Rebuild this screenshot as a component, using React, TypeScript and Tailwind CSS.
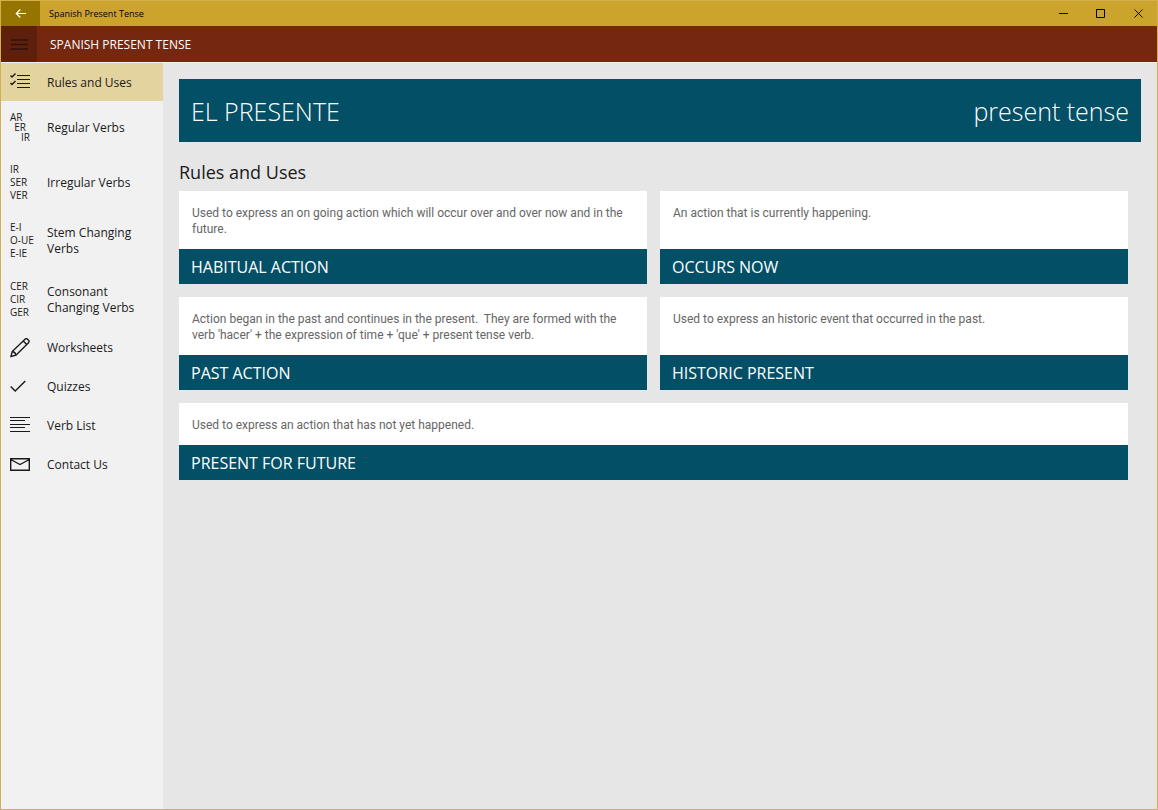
import { ReactNode, useState } from "react";

type NavItem = {
  label: string;
  height: string;
  icon: ReactNode;
};

type Rule = {
  title: string;
  text: string;
  wide?: boolean;
};

const rules: Rule[] = [
  {
    title: "HABITUAL ACTION",
    text: "Used to express an on going action which will occur over and over now and in the future.",
  },
  { title: "OCCURS NOW", text: "An action that is currently happening." },
  {
    title: "PAST ACTION",
    text: "Action began in the past and continues in the present.\u00a0 They are formed with the verb 'hacer' + the expression of time + 'que' + present tense verb.",
  },
  {
    title: "HISTORIC PRESENT",
    text: "Used to express an historic event that occurred in the past.",
  },
  {
    title: "PRESENT FOR FUTURE",
    text: "Used to express an action that has not yet happened.",
    wide: true,
  },
];

const Icon = ({ children }: { children: ReactNode }) => (
  <svg
    width="20"
    height="20"
    viewBox="0 0 20 20"
    fill="none"
    stroke="currentColor"
    strokeWidth="1.4"
    aria-hidden="true"
  >
    {children}
  </svg>
);

const Endings = ({ lines }: { lines: string[] }) => (
  <span className="flex flex-col text-[10px] leading-[13px] whitespace-nowrap">
    {lines.map((line) => (
      <span key={line}>{line}</span>
    ))}
  </span>
);

const navItems: NavItem[] = [
  {
    label: "Rules and Uses",
    height: "h-[38px]",
    icon: (
      <Icon>
        <path strokeWidth="1.2" d="M7 3.5h13M7 7.5h13M7 11.5h13M7 15.5h13" />
        <path d="M.5 3.5L2 5l3.5-3.5M.5 11L2 12.5 5.5 9" />
      </Icon>
    ),
  },
  {
    label: "Regular Verbs",
    height: "h-[52px]",
    icon: (
      <span className="flex flex-col w-5 text-[10px] leading-[10px]">
        <span>AR</span>
        <span className="text-center">ER</span>
        <span className="text-right">IR</span>
      </span>
    ),
  },
  {
    label: "Irregular Verbs",
    height: "h-[58px]",
    icon: <Endings lines={["IR", "SER", "VER"]} />,
  },
  {
    label: "Stem Changing Verbs",
    height: "h-[59px]",
    icon: <Endings lines={["E-I", "O-UE", "E-IE"]} />,
  },
  {
    label: "Consonant Changing Verbs",
    height: "h-[58px]",
    icon: <Endings lines={["CER", "CIR", "GER"]} />,
  },
  {
    label: "Worksheets",
    height: "h-[39px]",
    icon: (
      <Icon>
        <path d="M1 18.5l1.2-5L15 1.2a1.8 1.8 0 0 1 2.5 0l1 1a1.8 1.8 0 0 1 0 2.5L6 17.2z" />
        <path d="M13.2 3l3.6 3.6M2.2 13.5c1.8.3 3.4 1.8 3.8 3.7" />
      </Icon>
    ),
  },
  {
    label: "Quizzes",
    height: "h-[39px]",
    icon: (
      <Icon>
        <path d="M.7 9.5L5.2 14 15.3 4" />
      </Icon>
    ),
  },
  {
    label: "Verb List",
    height: "h-[39px]",
    icon: (
      <Icon>
        <path
          strokeWidth="1"
          d="M0 1.5h20M0 4.5h15M0 8.5h20M0 11.5h15M0 15.5h20"
        />
      </Icon>
    ),
  },
  {
    label: "Contact Us",
    height: "h-[39px]",
    icon: (
      <Icon>
        <path d="M.7 3.7h18.6v11.6H.7zM.7 4.5L10 9.5l9.3-5" />
      </Icon>
    ),
  },
];

const TitleBar = () => (
  <div className="flex h-[25px] items-stretch bg-[#cca42b] text-black">
    <button
      aria-label="Back"
      className="flex w-[39px] items-center justify-center bg-[#967400] text-white"
    >
      <svg width="12" height="10" viewBox="0 0 12 10" fill="none" stroke="currentColor">
        <path strokeWidth="1.2" d="M11 4.5H1M5.3.5l-4 4 4 4" />
      </svg>
    </button>
    <span className="flex-1 self-center pl-[9px] text-[9px] leading-3">
      Spanish Present Tense
    </span>
    <button aria-label="Minimize" className="flex w-[37px] items-center justify-center">
      <svg width="9" height="9" viewBox="0 0 9 9" stroke="currentColor">
        <path d="M0 4.5h9" />
      </svg>
    </button>
    <button aria-label="Maximize" className="flex w-[37px] items-center justify-center">
      <svg width="9" height="9" viewBox="0 0 9 9" fill="none" stroke="currentColor">
        <path d="M.5.5h8v8h-8z" />
      </svg>
    </button>
    <button aria-label="Close" className="flex w-[38px] items-center justify-center">
      <svg width="9" height="9" viewBox="0 0 9 9" stroke="currentColor">
        <path d="M.5.5l8 8M8.5.5l-8 8" />
      </svg>
    </button>
  </div>
);

const Header = () => (
  <header className="flex h-[37px] items-stretch border-b border-[#f1efee] bg-[#75270f] text-white">
    <button
      aria-label="Menu"
      className="flex w-9 items-center justify-center bg-[#5e200d] text-[#32110a]"
    >
      <svg width="17" height="12" viewBox="0 0 17 12" stroke="currentColor">
        <path strokeWidth="1.4" d="M0 2h17M0 6.5h17M0 11h17" />
      </svg>
    </button>
    <h1 className="self-center pt-0.5 pl-[13px] text-[12px]">SPANISH PRESENT TENSE</h1>
  </header>
);

const RuleCard = ({ rule }: { rule: Rule }) => (
  <article className={rule.wide ? "col-span-2 flex flex-col" : "flex flex-col"}>
    <p className="flex-1 bg-white pt-[14px] pr-2 pb-3 pl-[13px] font-[Roboto,sans-serif] text-[12px] leading-4 text-[#666]">
      {rule.text}
    </p>
    <h3 className="bg-[#024f66] px-3 pt-[5px] pb-[3px] text-[16px] leading-[27px] text-white">
      {rule.title}
    </h3>
  </article>
);

const App = () => {
  const [selected, setSelected] = useState("Rules and Uses");

  return (
    <div className="flex min-h-screen flex-col border border-[#d3b04c] bg-[#e6e6e6] font-['Open_Sans',sans-serif]">
      <TitleBar />
      <Header />
      <div className="flex flex-1">
        <nav className="w-[162px] shrink-0 bg-[#f1f1f1] text-[#1a1a1a]">
          {navItems.map((item) => (
            <button
              key={item.label}
              onClick={() => setSelected(item.label)}
              className={`flex w-full items-center pl-[9px] text-left ${item.height} ${
                selected === item.label ? "bg-[#e3d39e]" : ""
              }`}
            >
              <span className="w-[37px] shrink-0">{item.icon}</span>
              <span className="pt-px pr-4 text-[12px] leading-4">{item.label}</span>
            </button>
          ))}
        </nav>
        <main className="min-w-0 flex-1 p-4">
          <div className="flex h-[63px] items-center justify-between bg-[#024f66] px-3 pt-[3px] text-[25px] font-light text-white">
            <h2>EL PRESENTE</h2>
            <span>present tense</span>
          </div>
          <h2 className="mt-[18px] text-[18px] leading-6 text-[#1a1a1a]">
            Rules and Uses
          </h2>
          <div className="mt-[7px] mr-[13px] grid grid-cols-2 gap-[13px]">
            {rules.map((rule) => (
              <RuleCard key={rule.title} rule={rule} />
            ))}
          </div>
        </main>
      </div>
    </div>
  );
};

export default App;
